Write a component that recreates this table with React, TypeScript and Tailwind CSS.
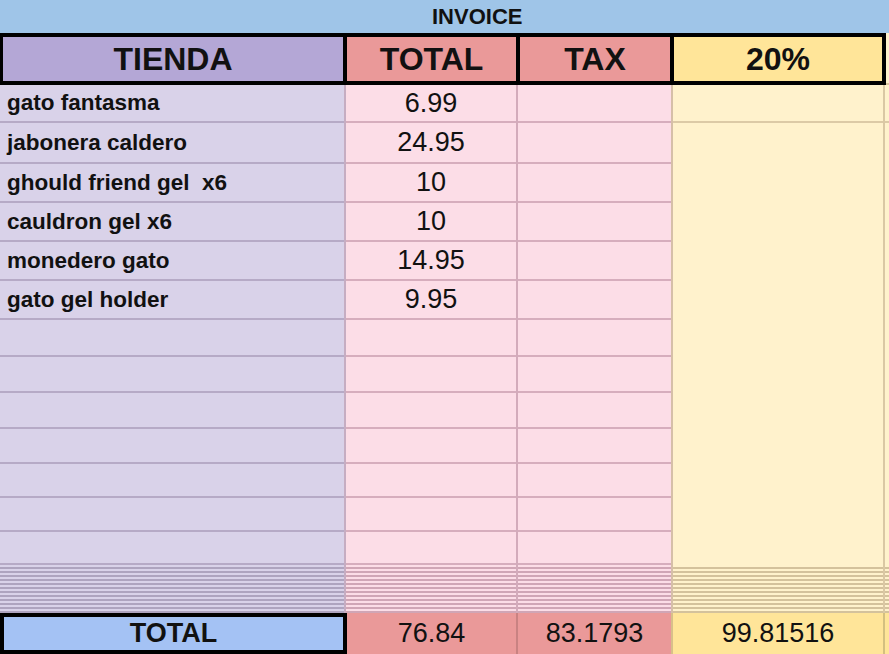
const items = [
  { name: 'gato fantasma', total: '6.99' },
  { name: 'jabonera caldero', total: '24.95' },
  { name: 'ghould friend gel  x6', total: '10' },
  { name: 'cauldron gel x6', total: '10' },
  { name: 'monedero gato', total: '14.95' },
  { name: 'gato gel holder', total: '9.95' },
]

// row heights incl. the 2px grid line at the bottom
const rowHeights = ['h-[38px]', 'h-[41px]', 'h-[39px]', 'h-[39px]', 'h-[39px]', 'h-[39px]', 'h-[37px]', 'h-[36px]', 'h-[36px]', 'h-[35px]', 'h-[34px]', 'h-[34px]', 'h-[33px]']
const stripes = Array.from({ length: 12 })

function Stripes({ line }: { line: string }) {
  return (
    <div className="flex flex-col">
      {stripes.map((_, i) => (
        <div key={i} className={`h-[4px] border-b-2 ${line}`} />
      ))}
    </div>
  )
}

export default function App() {
  return (
    <div className="h-[654px] w-[889px] overflow-hidden bg-white font-['Liberation_Sans',Arial,sans-serif] text-[#111]">
      <div className="flex h-[33px] items-center bg-[#9fc5e8] pl-[432px] text-[22px] font-bold leading-none">
        INVOICE
      </div>

      {/* header row */}
      <div className="flex h-[52px]">
        <div className="flex w-[886px] border-y-4 border-l-[3px] border-black text-[32px] font-bold leading-none">
          <div className="flex w-[344px] items-center justify-center border-r-4 border-black bg-[#b4a7d6]">TIENDA</div>
          <div className="flex w-[173px] items-center justify-center border-r-4 border-black bg-[#ea9999]">TOTAL</div>
          <div className="flex w-[154px] items-center justify-center border-r-4 border-black bg-[#ea9999]">TAX</div>
          <div className="flex w-[212px] items-center justify-center border-r-4 border-black bg-[#ffe599]">20%</div>
        </div>
        <div className="flex-1 border-b-2 border-[#d9c6a0] bg-[#fff2cc]" />
      </div>

      {/* body */}
      <div className="flex">
        <div className="flex w-[346px] flex-col border-r-2 border-[#c6adc2] bg-[#d9d2e9]">
          {rowHeights.map((h, i) => (
            <div key={i} className={`${h} flex items-center border-b-2 border-[#b6aac6] pl-[7px] text-[22.5px] font-bold`}>
              {items[i]?.name.replace(/ /g, '\u00a0')}
            </div>
          ))}
          <Stripes line="border-[#aea4bf]" />
        </div>
        <div className="flex w-[172px] flex-col border-r-2 border-[#d3abbb] bg-[#fcdde7]">
          {rowHeights.map((h, i) => (
            <div key={i} className={`${h} flex items-center justify-center border-b-2 border-[#d6adbd] text-[27px]`}>
              {items[i]?.total}
            </div>
          ))}
          <Stripes line="border-[#d0a6b6]" />
        </div>
        <div className="flex w-[155px] flex-col border-r-2 border-[#d6bfa8] bg-[#fcdde7]">
          {rowHeights.map((h, i) => (
            <div key={i} className={`${h} border-b-2 border-[#d6adbd]`} />
          ))}
          <Stripes line="border-[#d0a6b6]" />
        </div>
        <div className="flex w-[212px] flex-col border-r-2 border-[#dac8a4] bg-[#fff2cc]">
          <div className="h-[38px] border-b-2 border-[#dccaa6]" />
          <div className="h-[442px]" />
          <Stripes line="border-[#d4c29c]" />
        </div>
        <div className="flex flex-1 flex-col bg-[#fff2cc]">
          <div className="h-[38px] border-b-2 border-[#dccaa6]" />
          <div className="h-[442px]" />
          <Stripes line="border-[#d4c29c]" />
        </div>
      </div>

      {/* footer */}
      <div className="flex h-[41px] text-[27px] leading-none">
        <div className="flex w-[347px] items-center justify-center border-4 border-black bg-[#a4c2f4] text-[27px] font-bold">
          TOTAL
        </div>
        <div className="flex w-[171px] items-center justify-center border-r-2 border-[#c98282] bg-[#ea9999]">76.84</div>
        <div className="flex w-[155px] items-center justify-center border-r-2 border-[#d8c08a] bg-[#ea9999]">83.1793</div>
        <div className="flex w-[212px] items-center justify-center border-r-2 border-[#d4c080] bg-[#ffe599]">99.81516</div>
        <div className="flex-1 bg-[#ffe599]" />
      </div>
    </div>
  )
}
